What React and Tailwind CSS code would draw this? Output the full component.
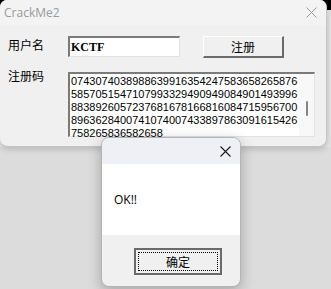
import React from 'react';

const cjk = { fontFamily: '"Noto Sans CJK SC", "Noto Sans", sans-serif' };

const lines = [
  '0743074038988639916354247583658265876',
  '5857051547107993329490949084901493996',
  '8838926057237681678166816084715956700',
  '8963628400741074007433897863091615426',
  '758265836582658',
];

export default function App() {
  return (
    <div className="w-[331px] h-[289px] relative overflow-hidden bg-[#dcdcdc]">
      {/* main window */}
      <div className="flex bg-[linear-gradient(to_bottom,#000_0px,#000_10px,#e4e4e4_10px,#e4e4e4_147px,#dcdcdc_147px)]">
        <div className="w-[327px] h-[147px] rounded-t-[7px] rounded-b-[8px] bg-[#f0f0f0] border-r border-b border-[#c4c4c4] flex flex-col overflow-hidden shadow-[0_2px_6px_rgba(0,0,0,0.18)]">
          <div className="h-[25px] bg-[#f3f3f3] flex items-center justify-between pl-1 pr-[8px] shrink-0">
            <span className="text-[12px] text-[#9a9a9a]" style={{ fontFamily: '"Open Sans", "Noto Sans", sans-serif' }}>CrackMe2</span>
            <svg width="11" height="11" viewBox="0 0 11 11" className="mr-[1px]">
              <path d="M0.5 0.5 L10.5 10.5 M10.5 0.5 L0.5 10.5" stroke="#9a9a9a" strokeWidth="1" />
            </svg>
          </div>

          <div className="flex flex-col pl-[8px] pt-[11px]">
            <div className="flex items-start h-[21px]">
              <span className="w-[60px] text-[12px] leading-[14px] mt-[2px] text-black" style={cjk}>用户名</span>
              <div className="w-[112px] h-[21px] bg-white border-t-2 border-l-2 border-b border-r border-t-[#7a7a7a] border-l-[#7a7a7a] border-b-[#e3e3e3] border-r-[#e3e3e3] flex items-center pl-[1px]">
                <span className="text-[12px] font-semibold leading-none text-black" style={{ fontFamily: '"Liberation Serif", serif' }}>KCTF</span>
              </div>
              <button className="ml-[23px] w-[81px] h-[22px] bg-[#f0f0f0] border-t border-l border-t-white border-l-white border-b-2 border-r-2 border-b-[#6a6a6a] border-r-[#6a6a6a] flex items-center justify-center text-[12px] text-black" style={cjk}>
                注册
              </button>
            </div>

            <div className="flex items-start mt-[15px]">
              <span className="w-[60px] text-[12px] leading-[14px] -mt-[3px] text-black" style={cjk}>注册码</span>
              <div className="w-[247px] h-[65px] bg-white border-t-2 border-l-2 border-b border-r border-t-[#7a7a7a] border-l-[#7a7a7a] border-b-[#e3e3e3] border-r-[#e3e3e3] flex">
                <div className="flex-1 pl-[1px] pt-[1px] text-[11px] leading-[13px] text-black" style={{ fontFamily: '"Liberation Sans", Arial, sans-serif' }}>
                  {lines.map((l, i) => (
                    <div key={i} className="whitespace-nowrap">{l}</div>
                  ))}
                </div>
                <div className="w-[15px] bg-[#f8f8f8] flex justify-center pt-[27px]">
                  <div className="w-[2px] h-[15px] bg-[#858585] rounded-full" />
                </div>
              </div>
            </div>
          </div>
        </div>
        <div className="w-[4px]" />
      </div>

      {/* message box */}
      <div className="absolute left-[101px] top-[137px] w-[140px] h-[150px] rounded-[8px] border border-[#b4b4b4] bg-[#f0f0f0] overflow-hidden flex flex-col shadow-[0_4px_14px_rgba(0,0,0,0.25)]">
        <div className="h-[26px] bg-[#eff0f6] flex items-center justify-end pr-[9px] shrink-0">
          <svg width="11" height="11" viewBox="0 0 11 11">
            <path d="M0.5 0.5 L10.5 10.5 M10.5 0.5 L0.5 10.5" stroke="#1a1a1a" strokeWidth="1.1" />
          </svg>
        </div>
        <div className="h-[71px] bg-white flex items-center pl-[12px] shrink-0">
          <span className="text-[12px] text-black" style={{ fontFamily: '"Open Sans", "Noto Sans", sans-serif' }}>OK!!</span>
        </div>
        <div className="flex-1 pt-[13px] pl-[32px]">
          <div className="w-[88px] h-[27px] border-2 border-[#6a6a6a] bg-[#f0f0f0] p-[2px]">
            <div className="w-full h-full border border-dotted border-black flex items-center justify-center text-[12px] text-black" style={cjk}>
              确定
            </div>
          </div>
        </div>
      </div>
    </div>
  );
}
